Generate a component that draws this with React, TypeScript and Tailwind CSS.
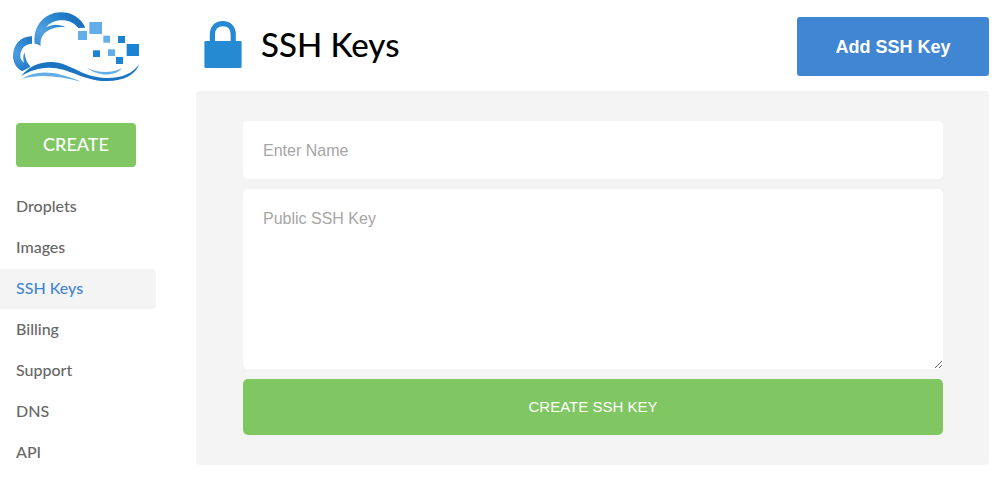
import React from "react";

const navItems = ["Droplets", "Images", "SSH Keys", "Billing", "Support", "DNS", "API"];

function CloudLogo() {
  return (
    <svg viewBox="0 0 480 300" className="h-[100px] w-40" role="img" aria-label="Cloud home">
      <defs>
        <radialGradient id="arcLarge" gradientUnits="userSpaceOnUse" cx="122" cy="95" r="110">
          <stop offset="0" stopColor="#56a3e2" />
          <stop offset="0.65" stopColor="#2380cb" />
          <stop offset="1" stopColor="#1a72c0" />
        </radialGradient>
        <radialGradient id="arcSmall" gradientUnits="userSpaceOnUse" cx="48" cy="160" r="70">
          <stop offset="0" stopColor="#4d9ddf" />
          <stop offset="1" stopColor="#1a74c2" />
        </radialGradient>
      </defs>
      <path
        d="M104 131C98 78 134 37 183 37C218 37 243 55 256 83L235 84C222 69 206 61 186 61C165 61 149 69 138 82C158 71 178 72 198 82C174 79 155 84 141 94C126 104 120 119 122 138C117 134 111 131 104 131Z"
        fill="url(#arcLarge)"
      />
      <path
        d="M96 109C63 108 39 134 39 168C39 188 50 205 66 214L92 200C80 189 76 174 73 157C69 167 69 178 72 188C64 182 60 175 61 166C62 146 76 131 96 131Z"
        fill="url(#arcSmall)"
      />
      <path
        d="M64 228C86 200 119 185 155 186C211 188 241 229 313 234C361 237 399 221 417 193C407 225 370 244 318 243C245 242 207 202 146 203C112 204 88 213 64 228Z"
        fill="#1a74c2"
      />
      <path d="M66 236C111 207 171 213 243 245C177 228 119 221 66 236Z" fill="#63ade8" />
      <path d="M262 204C294 219 335 221 367 204C344 231 294 229 262 204Z" fill="#63ade8" />
      <g fill="#63ade8">
        <rect x="268" y="66" width="38" height="36" />
        <rect x="234" y="93" width="27" height="27" />
        <rect x="310" y="107" width="20" height="21" />
        <rect x="324" y="148" width="21" height="20" />
      </g>
      <g fill="#1b82d4">
        <rect x="354" y="108" width="21" height="21" />
        <rect x="380" y="132" width="37" height="36" />
        <rect x="279" y="151" width="21" height="20" />
        <rect x="348" y="171" width="21" height="21" />
      </g>
    </svg>
  );
}

function LockIcon() {
  return (
    <svg viewBox="0 0 38 48" className="h-12 w-[38px]" aria-hidden="true">
      <path d="M8.4 22V14.5C8.4 7.8 12.4 3.6 18.8 3.6S29.2 7.8 29.2 14.5V22" fill="none" stroke="#268ad3" strokeWidth="5.2" />
      <rect x="0.4" y="21" width="37.2" height="27" rx="1.2" fill="#268ad3" />
    </svg>
  );
}

export default function App() {
  return (
    <div className="flex min-h-screen bg-white pr-3.5 font-['Lato','Open_Sans',sans-serif]">
      <aside className="w-[156px] shrink-0">
        <a href="#home" className="block w-full overflow-hidden">
          <CloudLogo />
        </a>
        <div className="px-4 pt-[23px]">
          <button type="button" className="h-11 w-[120px] rounded bg-[#80c763] pb-0.5 text-lg font-medium text-white">
            CREATE
          </button>
        </div>
        <nav className="mt-5 flex flex-col gap-px">
          {navItems.map((item) => (
            <a
              key={item}
              href={`#${item.toLowerCase().replace(" ", "-")}`}
              aria-current={item === "SSH Keys" ? "page" : undefined}
              className={
                item === "SSH Keys"
                  ? "flex h-10 items-center rounded-r bg-[#f4f4f4] pb-0.5 pl-4 text-base font-medium text-[#4285d2]"
                  : "flex h-10 items-center pb-0.5 pl-4 text-base font-medium text-[#676767]"
              }
            >
              {item}
            </a>
          ))}
        </nav>
      </aside>
      <main className="ml-10 min-w-0 flex-1">
        <header className="flex h-[91px] items-start justify-between pt-[17px]">
          <div className="flex items-start gap-[19px] pl-2 pt-[3px]">
            <LockIcon />
            <h1 className="text-[33px] leading-[48px] font-medium text-black">SSH Keys</h1>
          </div>
          <button
            type="button"
            className="h-[59px] w-48 rounded-[3px] bg-[#4186d2] font-['Liberation_Sans',Arial,sans-serif] text-lg font-bold text-white"
          >
            Add SSH Key
          </button>
        </header>
        <form
          onSubmit={(event) => event.preventDefault()}
          className="flex flex-col gap-2.5 rounded bg-[#f4f4f4] py-[30px] pr-[46px] pl-[47px] font-['Liberation_Sans',Arial,sans-serif] text-base"
        >
          <input
            type="text"
            aria-label="Enter Name"
            placeholder="Enter Name"
            className="h-[58px] w-full rounded-[5px] bg-white px-5 pt-0.5 text-[#444444] outline-none placeholder:text-[#a6a6a6]"
          />
          <textarea
            aria-label="Public SSH Key"
            placeholder="Public SSH Key"
            className="block h-[180px] w-full resize rounded-[5px] bg-white px-5 py-[18px] text-[#444444] outline-none placeholder:text-[#a6a6a6]"
          />
          <button type="submit" className="h-14 w-full rounded-[5px] bg-[#80c763] text-[15px] text-white">
            CREATE SSH KEY
          </button>
        </form>
      </main>
    </div>
  );
}
